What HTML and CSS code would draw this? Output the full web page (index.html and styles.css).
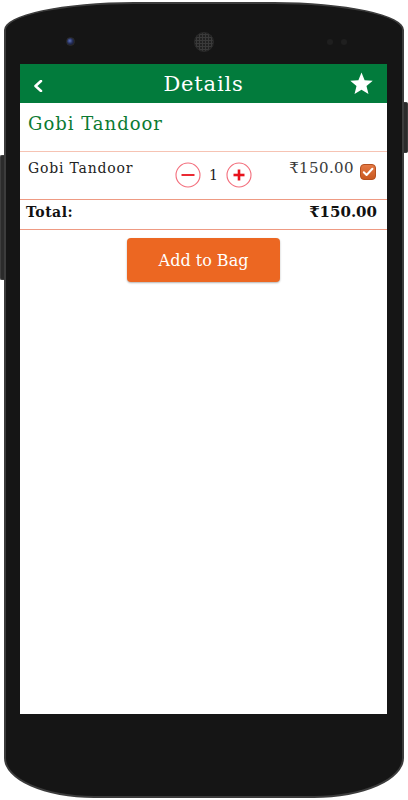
FILE: index.html
```html
<!DOCTYPE html>
<html>
<head>
    <meta charset="utf-8" />
    <title>Details</title>
    <link rel="stylesheet" href="styles.css">
</head>
<body>
    <div class="device">
        <div class="key key-left"></div>
        <div class="phone">
            <div class="bezel-top">
                <span class="camera"></span>
                <span class="speaker"></span>
                <span class="sensor"></span>
                <span class="sensor"></span>
            </div>
            <div class="screen">
                <div class="toolbar">
                    <svg class="back" width="10" height="12" viewBox="0 0 10 12">
                        <polyline points="8,1 2.5,6 8,11" fill="none" stroke="#fff" stroke-width="2.6" stroke-linecap="round" stroke-linejoin="round" />
                    </svg>
                    <div class="toolbar-title">Details</div>
                    <svg class="star" width="25" height="24" viewBox="0 0 24 23">
                        <path d="M12 0.5l3 7.3 7.8.6-6 5.1 1.9 7.7L12 17l-6.7 4.2 1.9-7.7-6-5.1 7.8-.6z" fill="#fff" />
                    </svg>
                </div>
                <div class="dish-title">Gobi Tandoor</div>
                <div class="order-row">
                    <div class="order-name">Gobi Tandoor</div>
                    <div class="stepper">
                        <svg class="step-btn" width="26" height="26" viewBox="0 0 26 26">
                            <circle cx="13" cy="13" r="12" fill="none" stroke="#f36f7d" stroke-width="1.1" />
                            <line x1="6.5" y1="13" x2="19.5" y2="13" stroke="#e8121c" stroke-width="1.8" />
                        </svg>
                        <span class="step-count">1</span>
                        <svg class="step-btn" width="26" height="26" viewBox="0 0 26 26">
                            <circle cx="13" cy="13" r="12" fill="none" stroke="#f36f7d" stroke-width="1.1" />
                            <line x1="7.5" y1="13" x2="18.5" y2="13" stroke="#e8121c" stroke-width="2.6" />
                            <line x1="13" y1="7.5" x2="13" y2="18.5" stroke="#e8121c" stroke-width="2.6" />
                        </svg>
                    </div>
                    <div class="order-price">₹150.00</div>
                    <svg class="check" width="16" height="16" viewBox="0 0 16 16">
                        <defs>
                            <linearGradient id="chk" x1="0" y1="0" x2="0" y2="1">
                                <stop offset="0" stop-color="#e57a45" />
                                <stop offset="1" stop-color="#c9581f" />
                            </linearGradient>
                        </defs>
                        <rect x="0.5" y="0.5" width="15" height="15" rx="3.5" fill="url(#chk)" stroke="#b5501f" />
                        <polyline points="3.8,8.2 6.6,11 12.4,4.8" fill="none" stroke="#fff" stroke-width="2" stroke-linecap="round" stroke-linejoin="round" />
                    </svg>
                </div>
                <div class="total-row">
                    <span class="total-label">Total:</span>
                    <span class="total-value">₹150.00</span>
                </div>
                <div class="actions">
                    <button class="add-btn">Add to Bag</button>
                </div>
            </div>
        </div>
        <div class="key key-right"></div>
    </div>
</body>
</html>
```

FILE: styles.css
```css
* { box-sizing: border-box; }
body { margin: 0; background: #fff; font-family: "DejaVu Serif", "Liberation Serif", serif; }

.device { display: flex; align-items: flex-start; width: 408px; }
.key { width: 4px; background: #2b2b2b; border: 1px solid #3d3d3d; }
.key-left { margin-top: 155px; height: 125px; border-right: none; border-radius: 2px 0 0 2px; }
.key-right { margin-top: 102px; height: 51px; border-left: none; border-radius: 0 2px 2px 0; }

.phone { width: 400px; height: 796px; margin-top: 2px; background: #151515; border: 2px solid #3c3c3c; border-radius: 130px 130px 90px 90px / 28px 28px 40px 40px; display: flex; flex-direction: column; align-items: center; }
.bezel-top { width: 100%; height: 60px; padding: 15px 0 0 60px; display: flex; align-items: center; }
    .camera { width: 9px; height: 9px; border-radius: 50%; background: radial-gradient(circle at 40% 40%, #5b6fb8 0, #26305c 45%, #0d0d14 100%); border: 1px solid #2c2c2c; }
    .speaker { width: 20px; height: 20px; margin-left: 119px; border-radius: 50%; background: radial-gradient(circle, #3a3a3a 1px, #1d1d1d 1.5px) 0 0 / 3px 3px; border: 1px solid #2a2a2a; }
    .sensor { width: 6px; height: 6px; border-radius: 50%; background: #1f1f1f; margin-left: 8px; }
    .speaker + .sensor { margin-left: 113px; }

.screen { width: 367px; height: 650px; margin-left: -1px; background: #fff; }

.toolbar { height: 39px; background: #027b3c; display: grid; grid-template-columns: 1fr auto 1fr; align-items: center; padding: 0 13px 0 13px; }
    .back { display: block; margin-top: 4px; }
    .toolbar-title { color: #fff; font-size: 21px; letter-spacing: 0.8px; }
    .star { justify-self: end; display: block; }

.dish-title { height: 49px; padding: 9px 8px 0; font-size: 18px; line-height: 24px; letter-spacing: 1px; color: #0b7a32; border-bottom: 1px solid #f6c3b3; }

.order-row { height: 48px; display: flex; align-items: flex-start; padding: 6px 11px 0 8px; border-bottom: 1px solid #ee9a83; }
    .order-name { width: 147px; font-size: 14px; line-height: 20px; letter-spacing: 0.8px; color: #222; }
    .stepper { display: flex; align-items: flex-start; gap: 8px; margin-top: 4px; }
    .step-btn { display: block; }
    .step-count { font-size: 14px; line-height: 20px; margin-top: 3px; color: #222; }
    .order-price { margin-left: auto; font-size: 15px; line-height: 20px; letter-spacing: 0.4px; color: #3a3a3a; }
    .check { display: block; margin: 6px 0 0 6px; }

.total-row { height: 30px; display: flex; justify-content: space-between; align-items: flex-start; padding: 2px 10px 0 6px; border-bottom: 1px solid #ee9a83; font-weight: bold; line-height: 20px; color: #111; }
    .total-label { font-size: 14px; letter-spacing: 0.5px; }
    .total-value { font-size: 15px; }

.actions { display: flex; justify-content: center; padding-top: 8px; }
.add-btn { width: 153px; height: 44px; border: none; border-radius: 4px; background: #ec6722; color: #fff; font-family: "DejaVu Serif", "Liberation Serif", serif; font-size: 16px; box-shadow: 0 1px 2px rgba(0,0,0,.3); padding: 0; }
```
